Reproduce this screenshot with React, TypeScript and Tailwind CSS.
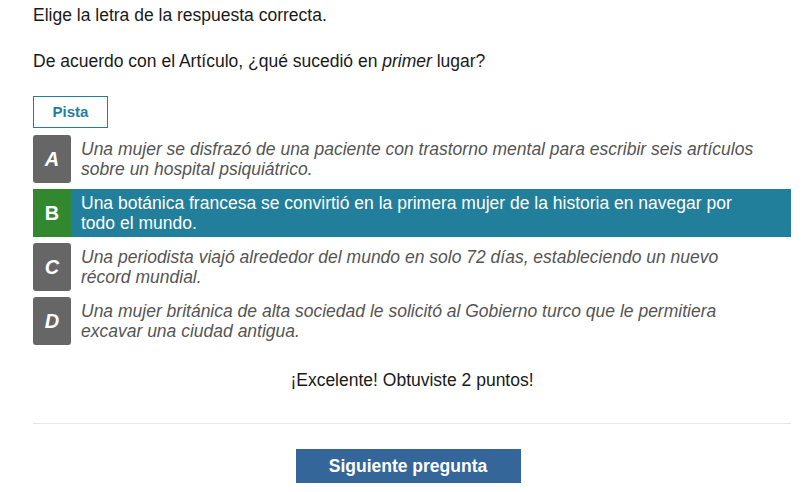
import React from "react";

const options = [
  { letter: "A", text: "Una mujer se disfrazó de una paciente con trastorno mental para escribir seis artículos sobre un hospital psiquiátrico.", selected: false },
  { letter: "B", text: "Una botánica francesa se convirtió en la primera mujer de la historia en navegar por todo el mundo.", selected: true },
  { letter: "C", text: "Una periodista viajó alrededor del mundo en solo 72 días, estableciendo un nuevo récord mundial.", selected: false },
  { letter: "D", text: "Una mujer británica de alta sociedad le solicitó al Gobierno turco que le permitiera excavar una ciudad antigua.", selected: false },
];

export default function App() {
  return (
    <div
      className="w-[808px] h-[492px] bg-white pl-[33px] pr-[17px] pt-[5px] text-[17.5px] leading-[20px] text-[#1a1a1a]"
      style={{ fontFamily: '"Liberation Sans", Arial, sans-serif' }}
    >
      <p>Elige la letra de la respuesta correcta.</p>
      <p className="mt-[26px]">
        De acuerdo con el Artículo, ¿qué sucedió en <i>primer</i> lugar?
      </p>
      <button className="mt-[25px] w-[75px] h-[32px] border border-[#1f7fa3] text-[#1f7fa3] text-[15px] font-bold flex items-center justify-center bg-white">
        Pista
      </button>
      <div className="mt-[7px] flex flex-col gap-[6px]">
        {options.map((o) =>
          o.selected ? (
            <div key={o.letter} className="flex h-[48px] bg-[#217f9b]">
              <div className="w-[38px] shrink-0 bg-[#31882f] text-white font-bold text-[20px] flex items-center justify-center">
                {o.letter}
              </div>
              <div className="flex items-center pl-[10px] pr-[24px] text-white text-[17.5px] leading-[20px]">
                {o.text}
              </div>
            </div>
          ) : (
            <div key={o.letter} className="flex h-[48px]">
              <div className="w-[38px] shrink-0 bg-[#666666] rounded-[3px] text-white font-bold italic text-[20px] flex items-center justify-center">
                {o.letter}
              </div>
              <div className="flex items-center pl-[10px] pr-[24px] text-[#555555] italic text-[17.5px] leading-[20px]">
                {o.text}
              </div>
            </div>
          )
        )}
      </div>
      <p className="mt-[25px] text-center">¡Excelente! Obtuviste 2 puntos!</p>
      <div className="mt-[33px] h-px bg-[#e6e6e6]" />
      <div className="mt-[25px] flex justify-center pr-[8px]">
        <button className="w-[225px] h-[34px] bg-[#346699] text-white font-bold text-[17.5px]">
          Siguiente pregunta
        </button>
      </div>
    </div>
  );
}
